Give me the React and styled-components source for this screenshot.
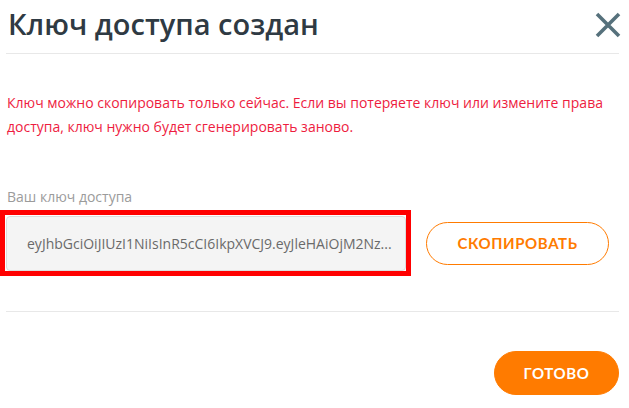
import React from "react";
import styled, { createGlobalStyle } from "styled-components";

const GlobalStyle = createGlobalStyle`
  body {
    margin: 0;
    background: #fff;
    font-family: "Open Sans", "Liberation Sans", sans-serif;
  }
`;

const App = () => {
  return (
    <>
      <GlobalStyle />
      <Modal>
        <Header>
          <Title>Ключ доступа создан</Title>
          <CloseButton aria-label="Закрыть">
            <svg width="26" height="26" viewBox="0 0 26 26">
              <path d="M2 2 L24 24 M24 2 L2 24" stroke="#56717c" strokeWidth="3.6" fill="none" />
            </svg>
          </CloseButton>
        </Header>

        <Warning>
          Ключ можно скопировать только сейчас. Если вы потеряете ключ или измените права
          доступа, ключ нужно будет сгенерировать заново.
        </Warning>

        <Label>Ваш ключ доступа</Label>
        <KeyRow>
          <Highlight>
            <KeyField>eyJhbGciOiJIUzI1NiIsInR5cCI6IkpXVCJ9.eyJleHAiOjM2Nz...</KeyField>
          </Highlight>
          <PillButton>Скопировать</PillButton>
        </KeyRow>

        <Footer>
          <PillButton $filled>Готово</PillButton>
        </Footer>
      </Modal>
    </>
  );
};

const Modal = styled.div`
  width: 629px;
  height: 408px;
  box-sizing: border-box;
  padding: 0 10px 0 6px;
  display: flex;
  flex-direction: column;
`;

const Header = styled.div`
  display: flex;
  justify-content: space-between;
  align-items: center;
  height: 54px;
  box-sizing: border-box;
  padding: 0 0 6px 2px;
  border-bottom: 1px solid #e8e8e8;
`;

const Title = styled.h1`
  margin: 0;
  font-size: 29px;
  line-height: 36px;
  font-weight: 600;
  color: #2f3a43;
`;

const CloseButton = styled.button`
  border: 0;
  background: none;
  padding: 0;
  margin: 2px -2px 0 0;
  display: flex;
  cursor: pointer;
`;

const Warning = styled.p`
  margin: 37px 0 0 1px;
  font-size: 14px;
  line-height: 24px;
  color: #ee1d3f;
`;

const Label = styled.div`
  margin: 48px 0 0 1px;
  font-size: 14px;
  line-height: 20px;
  color: #9b9b9b;
`;

const KeyRow = styled.div`
  display: flex;
  align-items: center;
  gap: 15px;
  margin: 3px 0 0 -6px;
`;

const Highlight = styled.div`
  border: 5px solid #ff0000;
  padding: 1px 0 0 1px;
`;

const KeyField = styled.div`
  width: 400px;
  height: 55px;
  box-sizing: border-box;
  display: flex;
  align-items: center;
  padding: 0 14px 0 20px;
  background: #f4f4f4;
  border: 1px solid #dcdcdc;
  border-radius: 4px;
  font-size: 14px;
  color: #6a6a6a;
  white-space: nowrap;
  overflow: hidden;
`;

const PillButton = styled.button`
  width: ${(p) => (p.$filled ? "125px" : "183px")};
  height: ${(p) => (p.$filled ? "44px" : "43px")};
  border-radius: 22px;
  border: 1px solid #ff7b00;
  background: ${(p) => (p.$filled ? "#ff7b00" : "#fff")};
  color: ${(p) => (p.$filled ? "#fff" : "#ff7b00")};
  font-family: "Lato", "Open Sans", sans-serif;
  font-weight: 700;
  font-size: 15px;
  letter-spacing: 0.6px;
  text-transform: uppercase;
  cursor: pointer;
`;

const Footer = styled.div`
  display: flex;
  justify-content: flex-end;
  margin-top: 35px;
  padding-top: 39px;
  border-top: 1px solid #e8e8e8;
`;

export default App;
